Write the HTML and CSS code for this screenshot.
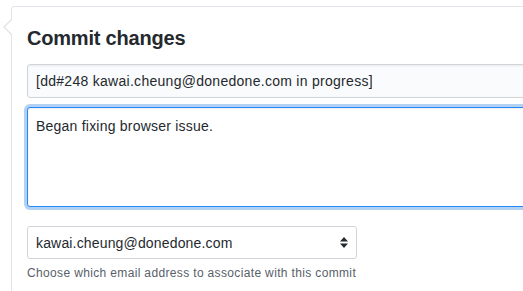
FILE: index.html
```html
<!DOCTYPE html>
<html lang="en">
<head>
    <meta charset="UTF-8">
    <meta name="viewport" content="width=device-width, initial-scale=1.0">
    <title>Commit changes</title>
    <link rel="stylesheet" href="styles.css">
</head>
<body>

    <div class="commit-form">
        <h3 class="commit-title">Commit changes</h3>
        <input class="form-control summary" type="text" value="[dd#248 kawai.cheung@donedone.com in progress]">
        <textarea class="form-control message">Began fixing browser issue.</textarea>

        <div class="select-wrap">
            <select class="form-select">
                <option>kawai.cheung@donedone.com</option>
            </select>
            <svg class="select-arrow" width="8" height="11" viewBox="0 0 8 11">
                <path d="M4 0L8 4.5H0z M4 11L0 6.5H8z" fill="#24292e"/>
            </svg>
        </div>
        <p class="note">Choose which email address to associate with this commit</p>
    </div>

</body>
</html>
```

FILE: styles.css
```css
html {
    height: 291px;
    overflow: hidden;
}

body {
    margin: 0;
    padding: 6px 0 0 11px;
    background-color: #fff;
    font-family: "Liberation Sans", Arial, sans-serif;
    color: #24292e;
    overflow: hidden;
}

.commit-form {
    position: relative;
    width: 540px;
    height: 300px;
    padding: 0 15px;
    border: 1px solid #e1e4e8;
    border-radius: 3px;
    background-color: #fff;
}

/* little arrow pointing at the avatar */
.commit-form::before,
.commit-form::after {
    content: "";
    position: absolute;
    top: 12px;
    width: 0;
    height: 0;
    border-style: solid;
    border-color: transparent;
}

.commit-form::before {
    left: -9px;
    border-width: 8px 8px 8px 0;
    border-right-color: #e1e4e8;
}

.commit-form::after {
    left: -7px;
    top: 13px;
    border-width: 7px 7px 7px 0;
    border-right-color: #fff;
}

.commit-title {
    margin: 0;
    padding-top: 19px;
    font-size: 20px;
    font-weight: bold;
    line-height: 24px;
    letter-spacing: -0.2px;
}

.form-control {
    display: block;
    box-sizing: border-box;
    width: 100%;
    margin: 0;
    padding: 6px 8px;
    font-family: inherit;
    font-size: 14px;
    line-height: 20px;
    color: #24292e;
    border: 1px solid #d1d5da;
    border-radius: 3px;
    box-shadow: inset 0 1px 2px rgba(27, 31, 35, 0.075);
    outline: none;
}

.summary {
    margin-top: 14px;
    height: 34px;
    background-color: #fafbfc;
    letter-spacing: 0.28px;
}

.message {
    margin-top: 9px;
    height: 100px;
    padding: 8px;
    resize: none;
    background-color: #fff;
    letter-spacing: 0.22px;
    border-color: #2188ff;
    box-shadow: inset 0 1px 2px rgba(27, 31, 35, 0.075), 0 0 0 3px rgba(3, 102, 214, 0.3);
}

.select-wrap {
    position: relative;
    width: 330px;
    margin-top: 19px;
}

.form-select {
    display: block;
    box-sizing: border-box;
    width: 100%;
    height: 33px;
    padding: 0 24px 0 8px;
    font-family: inherit;
    font-size: 14px;
    letter-spacing: 0.16px;
    color: #24292e;
    background-color: #fff;
    border: 1px solid #d1d5da;
    border-radius: 3px;
    -webkit-appearance: none;
    appearance: none;
    outline: none;
}

.select-arrow {
    position: absolute;
    right: 9px;
    top: 11px;
    pointer-events: none;
}

.note {
    margin: 5px 0 0;
    font-size: 12px;
    line-height: 18px;
    letter-spacing: 0.35px;
    color: #586069;
}
```
